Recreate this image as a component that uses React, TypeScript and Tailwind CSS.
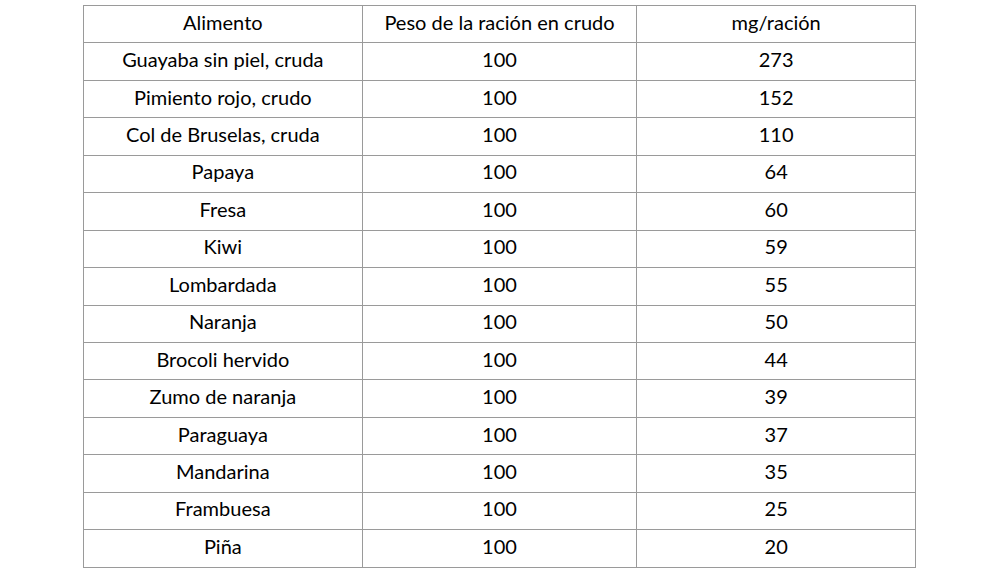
import React from "react";

const rows: [string, string, string][] = [
  ["Guayaba sin piel, cruda", "100", "273"],
  ["Pimiento rojo, crudo", "100", "152"],
  ["Col de Bruselas, cruda", "100", "110"],
  ["Papaya", "100", "64"],
  ["Fresa", "100", "60"],
  ["Kiwi", "100", "59"],
  ["Lombardada", "100", "55"],
  ["Naranja", "100", "50"],
  ["Brocoli hervido", "100", "44"],
  ["Zumo de naranja", "100", "39"],
  ["Paraguaya", "100", "37"],
  ["Mandarina", "100", "35"],
  ["Frambuesa", "100", "25"],
  ["Piña", "100", "20"],
];

export default function App() {
  const all: [string, string, string][] = [["Alimento", "Peso de la ración en crudo", "mg/ración"], ...rows];
  return (
    <div className="w-[1000px] h-[575px] bg-white pt-[5px] pl-[83px]">
      <table
        className="w-[833px] border-collapse text-black text-[20px]"
        style={{ fontFamily: "Lato, 'Open Sans', sans-serif" }}
      >
        <colgroup>
          <col className="w-[279px]" />
          <col className="w-[275px]" />
          <col className="w-[279px]" />
        </colgroup>
        <tbody>
          {all.map((r, i) => (
            <tr key={i} className="h-[37.45px]">
              {r.map((c, j) => (
                <td key={j} className="border border-[#9a9a9a] text-center align-middle p-0 pb-[5px] leading-none">
                  {c}
                </td>
              ))}
            </tr>
          ))}
        </tbody>
      </table>
    </div>
  );
}
